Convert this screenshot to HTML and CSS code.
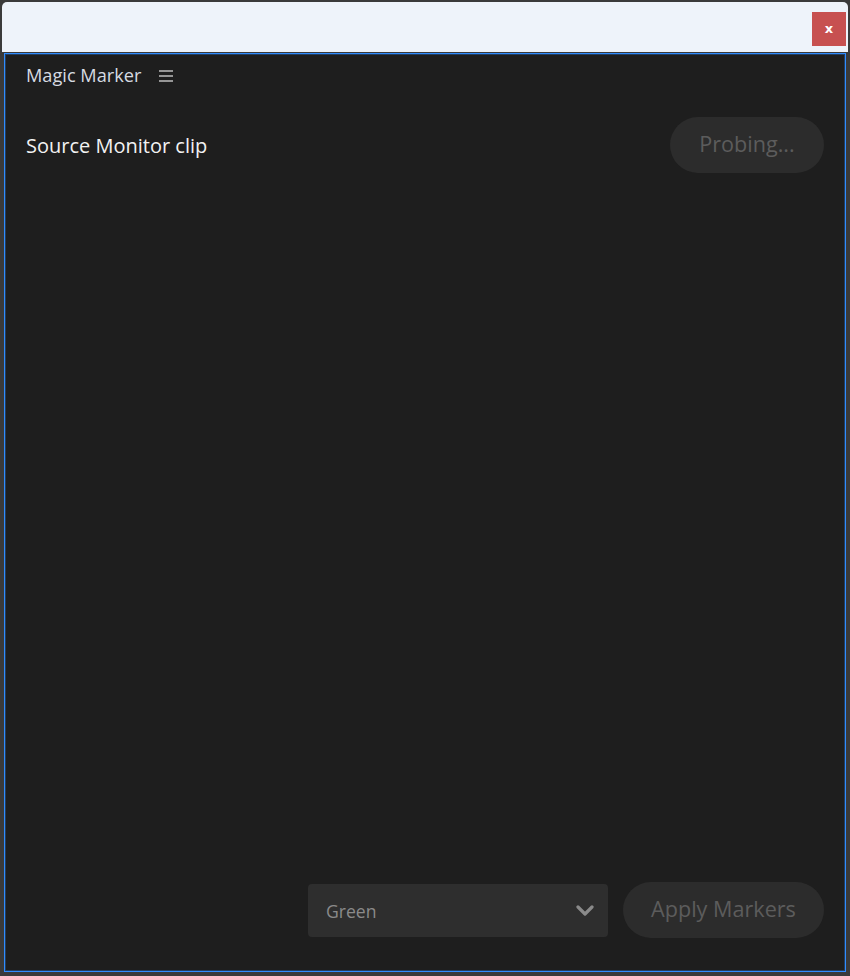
FILE: index.html
```html
<!DOCTYPE html>
<html>
<head>
<meta charset="utf-8">
<link rel="stylesheet" href="styles.css">
</head>
<body>
<div class="window">
  <div class="titlebar">
    <div class="close">x</div>
  </div>
  <div class="panel">
    <div class="header">
      <span class="panel-title">Magic Marker</span>
      <span class="menu-icon"><i></i><i></i><i></i></span>
    </div>
    <div class="source-row">
      <span class="source-label">Source Monitor clip</span>
      <button class="pill">Probing...</button>
    </div>
    <div class="spacer"></div>
    <div class="footer">
      <div class="select">
        <span class="select-value">Green</span>
        <svg class="chevron" width="18" height="12" viewBox="0 0 18 12"><polyline points="2,2 9,9 16,2" fill="none" stroke="#8a8a8a" stroke-width="3.2" stroke-linecap="round" stroke-linejoin="round"/></svg>
      </div>
      <button class="pill apply">Apply Markers</button>
    </div>
  </div>
</div>
</body>
</html>
```
FILE: styles.css
```css
html, body {
  margin: 0;
  padding: 0;
}
body {
  width: 850px;
  height: 976px;
  overflow: hidden;
  background: #3a3a3a;
  font-family: "Open Sans", "Noto Sans", sans-serif;
}
.window {
  display: flex;
  flex-direction: column;
  height: 976px;
  padding: 2px 0 0 2px;
  box-sizing: border-box;
}
.titlebar {
  height: 50px;
  margin-right: 2px;
  background: #eef3fa;
  border-radius: 5px 5px 0 0;
  display: flex;
  justify-content: flex-end;
  align-items: flex-start;
  padding: 10px 2px 0 0;
  box-sizing: border-box;
}
.close {
  width: 34px;
  height: 34px;
  background: #c75050;
  color: #ffffff;
  font-family: "DejaVu Sans", sans-serif;
  font-weight: bold;
  font-size: 13px;
  display: flex;
  align-items: center;
  justify-content: center;
  line-height: 1;
  padding-bottom: 2px;
  box-sizing: border-box;
}
.panel {
  flex: 1;
  margin: 1px 4px 4px 2px;
  border: 1px solid #2f8cff;
  box-shadow: inset 0 0 0 1px rgba(47, 140, 255, 0.3);
  background: #1e1e1e;
  display: flex;
  flex-direction: column;
  padding: 9px 21px 33px 21px;
}
.header {
  display: flex;
  align-items: center;
  height: 24px;
}
.panel-title {
  font-size: 18.2px;
  color: #d6dbe2;
  line-height: 24px;
}
.menu-icon {
  margin-left: 18px;
  display: flex;
  flex-direction: column;
  gap: 3px;
  width: 14px;
  margin-top: 1px;
}
.menu-icon i {
  display: block;
  height: 2px;
  background: #959595;
}
.source-row {
  margin-top: 30px;
  height: 56px;
  display: flex;
  align-items: center;
  justify-content: space-between;
}
.source-label {
  font-size: 20px;
  color: #f2f2f2;
  padding-top: 1px;
}
.pill {
  border: none;
  border-radius: 28px;
  background: #2c2c2c;
  color: #5c5c5c;
  font-family: "Open Sans", "Noto Sans", sans-serif;
  font-size: 21.6px;
  height: 56px;
  padding: 0 0 4px 0;
  box-sizing: border-box;
  width: 154px;
  display: flex;
  align-items: center;
  justify-content: center;
}
.spacer {
  flex: 1;
}
.footer {
  display: flex;
  justify-content: flex-end;
  align-items: center;
  gap: 15px;
}
.select {
  width: 300px;
  height: 53px;
  border-radius: 4px;
  background: #2e2e2e;
  display: flex;
  align-items: center;
  justify-content: space-between;
  padding: 0 14px 0 18px;
  box-sizing: border-box;
}
.select-value {
  font-size: 17.6px;
  color: #8a8a8a;
  padding-top: 1px;
}
.chevron {
  display: block;
  margin-top: 1px;
}
.apply {
  width: 201px;
}
```
